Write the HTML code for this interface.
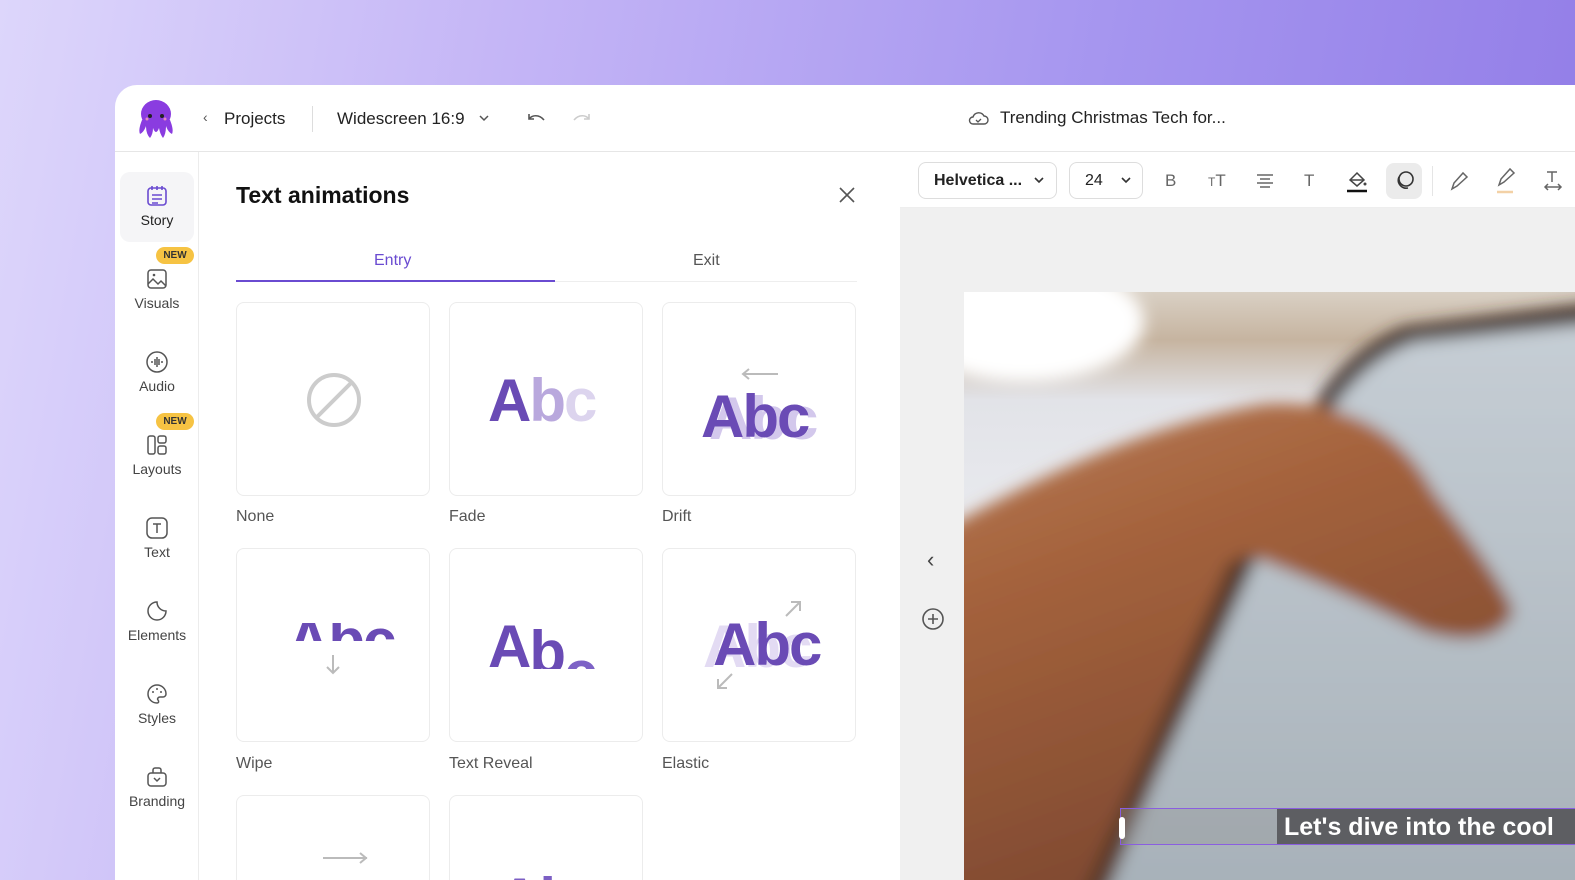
<!DOCTYPE html>
<html><head><meta charset="utf-8"><style>
*{box-sizing:border-box;margin:0;padding:0}
body{width:1575px;height:880px;overflow:hidden;font-family:"Liberation Sans",sans-serif;background:linear-gradient(100deg,#ddd6fb 0%,#c4b5f6 30%,#a595ef 65%,#8f79e6 100%);position:relative}
.app{position:absolute;left:115px;top:85px;width:1460px;height:795px;background:#fff;border-top-left-radius:22px;overflow:hidden}
.hdr{position:absolute;left:0;top:0;width:100%;height:67px;border-bottom:1px solid #e6e6e6}
.t{position:absolute;white-space:nowrap}
.side{position:absolute;left:0;top:67px;width:84px;height:730px;border-right:1px solid #ececec}
.nav{position:absolute;left:5px;width:74px;height:70px;text-align:center;font-size:14px;color:#444}
.nav svg{display:block;margin:12px auto 4px}
.new{position:absolute;left:41px;width:38px;height:17px;border-radius:9px;background:#f6c343;font-size:10px;font-weight:bold;color:#333;text-align:center;line-height:17px}
.card{position:absolute;width:194px;height:194px;border:1px solid #ececec;border-radius:8px;background:#fff;overflow:hidden}
.lbl{position:absolute;font-size:16px;color:#555}
.abc{position:absolute;font-weight:bold;font-size:60px;letter-spacing:-2px;color:#6a4bb5;line-height:60px}
.tb{position:absolute;top:67px;left:785px;width:700px;height:56px;border-bottom:1px solid #eee}
.canvas{position:absolute;left:785px;top:123px;width:680px;height:680px;background:#f0f0f0}
</style></head><body>
<div class="app">
 <div class="hdr">
  <svg style="position:absolute;left:21px;top:13px" width="40" height="42" viewBox="0 0 40 42"><ellipse cx="20" cy="16" rx="15" ry="14" fill="#8a3ce0"/><path d="M6 22 Q2 32 4 36 Q8 34 10 28 Q10 36 14 40 Q17 36 17 30 Q20 38 23 30 Q24 36 27 40 Q30 36 30 28 Q32 34 36 36 Q38 32 34 22Z" fill="#8a3ce0"/><circle cx="14" cy="18" r="2" fill="#222"/><circle cx="26" cy="18" r="2" fill="#222"/><circle cx="11" cy="21" r="1.5" fill="#e58ac0"/><circle cx="29" cy="21" r="1.5" fill="#e58ac0"/></svg>
  <div class="t" style="left:88px;top:24px;font-size:14px;color:#555">‹</div>
  <div class="t" style="left:109px;top:24px;font-size:17px;color:#222">Projects</div>
  <div style="position:absolute;left:197px;top:21px;width:1px;height:26px;background:#ddd"></div>
  <div class="t" style="left:222px;top:24px;font-size:17px;color:#222">Widescreen 16:9</div>
  <svg style="position:absolute;left:363px;top:28px" width="12" height="10"><path d="M2 3l4 4 4-4" stroke="#555" stroke-width="1.5" fill="none"/></svg>
  <svg style="position:absolute;left:410px;top:25px" width="22" height="16"><path d="M4 4v5h5M4 9c3-4 10-5 15 1" stroke="#555" stroke-width="1.6" fill="none"/></svg>
  <svg style="position:absolute;left:456px;top:25px" width="22" height="16"><path d="M18 4v5h-5M18 9c-3-4-10-5-15 1" stroke="#ccc" stroke-width="1.6" fill="none"/></svg>
  <svg style="position:absolute;left:852px;top:24px" width="22" height="18"><path d="M6 15h11a4 4 0 0 0 0-8 6 6 0 0 0-11 1 3.5 3.5 0 0 0 0 7z" stroke="#555" stroke-width="1.4" fill="none"/><path d="M9 11l2 2 3-3" stroke="#555" stroke-width="1.3" fill="none"/></svg>
  <div class="t" style="left:885px;top:23px;font-size:17px;color:#222">Trending Christmas Tech for...</div>
 </div>
 <div class="side">
  <div style="position:absolute;left:5px;top:20px;width:74px;height:70px;background:#f5f5f7;border-radius:10px"></div>
  <div class="nav" style="top:20px;color:#222"><svg width="24" height="24" viewBox="0 0 24 24"><rect x="3" y="4" width="18" height="17" rx="3" stroke="#6a4bd1" stroke-width="1.6" fill="none"/><path d="M7 2v4M12 2v4M17 2v4M7 11h10M7 15h10M7 19h6" stroke="#6a4bd1" stroke-width="1.6"/></svg>Story</div>
  <div class="new" style="top:95px">NEW</div>
  <div class="nav" style="top:103px"><svg width="24" height="24" viewBox="0 0 24 24"><rect x="3" y="3" width="18" height="18" rx="3" stroke="#555" stroke-width="1.5" fill="none"/><path d="M3 17l5-5 5 5 3-3 5 5" stroke="#555" stroke-width="1.5" fill="none"/><circle cx="9" cy="8" r="1.3" fill="#555"/></svg>Visuals</div>
  <div class="nav" style="top:186px"><svg width="24" height="24" viewBox="0 0 24 24"><circle cx="12" cy="12" r="10" stroke="#555" stroke-width="1.5" fill="none"/><path d="M7 11v2M10 9v6M12 7v10M14 9v6M17 11v2" stroke="#555" stroke-width="1.5"/></svg>Audio</div>
  <div class="new" style="top:261px">NEW</div>
  <div class="nav" style="top:269px"><svg width="24" height="24" viewBox="0 0 24 24"><rect x="3" y="3" width="7" height="18" rx="2" stroke="#555" stroke-width="1.5" fill="none"/><rect x="13" y="3" width="8" height="7" rx="2" stroke="#555" stroke-width="1.5" fill="none"/><rect x="13" y="13" width="8" height="8" rx="2" stroke="#555" stroke-width="1.5" fill="none"/></svg>Layouts</div>
  <div class="nav" style="top:352px"><svg width="24" height="24" viewBox="0 0 24 24"><rect x="2" y="2" width="20" height="20" rx="5" stroke="#555" stroke-width="1.5" fill="none"/><path d="M8 8h8M12 8v9" stroke="#555" stroke-width="1.5"/></svg>Text</div>
  <div class="nav" style="top:435px"><svg width="24" height="24" viewBox="0 0 24 24"><path d="M12 3a9 9 0 1 0 9 9c-5 0-9-4-9-9z" stroke="#555" stroke-width="1.5" fill="none"/></svg>Elements</div>
  <div class="nav" style="top:518px"><svg width="24" height="24" viewBox="0 0 24 24"><path d="M12 3a9 9 0 0 0 0 18c2 0 2-2 1-3s0-3 2-3h3a3 3 0 0 0 3-3c0-5-4-9-9-9z" stroke="#555" stroke-width="1.5" fill="none"/><circle cx="8" cy="10" r="1" fill="#555"/><circle cx="12" cy="7" r="1" fill="#555"/><circle cx="16" cy="10" r="1" fill="#555"/></svg>Styles</div>
  <div class="nav" style="top:601px"><svg width="24" height="24" viewBox="0 0 24 24"><rect x="3" y="8" width="18" height="13" rx="3" stroke="#555" stroke-width="1.5" fill="none"/><path d="M8 8V5a2 2 0 0 1 2-2h4a2 2 0 0 1 2 2v3M9 13l3 3 3-3" stroke="#555" stroke-width="1.5" fill="none"/></svg>Branding</div>
 </div>
 <div class="t" style="left:121px;top:97px;font-size:23px;font-weight:bold;color:#111">Text animations</div>
 <svg style="position:absolute;left:722px;top:100px" width="20" height="20"><path d="M3 3l14 14M17 3L3 17" stroke="#555" stroke-width="1.6"/></svg>
 <div class="t" style="left:259px;top:167px;font-size:16px;color:#6a4bd1">Entry</div>
 <div class="t" style="left:578px;top:167px;font-size:16px;color:#555">Exit</div>
 <div style="position:absolute;left:121px;top:195px;width:319px;height:2px;background:#6a4bd1"></div>
 <div style="position:absolute;left:440px;top:196px;width:302px;height:1px;background:#eee"></div>

 <div class="card" style="left:121px;top:217px"><svg style="position:absolute;left:68px;top:68px" width="58" height="58"><circle cx="29" cy="29" r="25" stroke="#ccc" stroke-width="4" fill="none"/><path d="M11 47L47 11" stroke="#ccc" stroke-width="4"/></svg></div>
 <div class="lbl" style="left:121px;top:423px">None</div>
 <div class="card" style="left:334px;top:217px"><div class="abc" style="left:38px;top:68px">A<span style="color:#b9a8dd">b</span><span style="color:#dcd4ee">c</span></div></div>
 <div class="lbl" style="left:334px;top:423px">Fade</div>
 <div class="card" style="left:547px;top:217px"><svg style="position:absolute;left:77px;top:64px" width="40" height="14"><path d="M38 7H3M9 2L3 7l6 5" stroke="#bbb" stroke-width="2" fill="none"/></svg><div class="abc" style="left:46px;top:86px;color:#d3c8ec">Abc</div><div class="abc" style="left:38px;top:84px">Abc</div></div>
 <div class="lbl" style="left:547px;top:423px">Drift</div>

 <div class="card" style="left:121px;top:463px"><div style="position:absolute;left:0;top:74px;width:194px;height:18px;overflow:hidden"><div class="abc" style="left:50px;top:-12px">Abc</div></div><svg style="position:absolute;left:88px;top:104px" width="16" height="22"><path d="M8 2v18M2 14l6 6 6-6" stroke="#bbb" stroke-width="2" fill="none"/></svg></div>
 <div class="lbl" style="left:121px;top:670px">Wipe</div>
 <div class="card" style="left:334px;top:463px"><div style="position:absolute;left:0;top:60px;width:194px;height:60px;overflow:hidden"><div class="abc" style="left:38px;top:8px">A<span style="position:relative;top:6px">b</span><span style="position:relative;top:26px;color:#7d62c6">c</span></div></div></div>
 <div class="lbl" style="left:334px;top:670px">Text Reveal</div>
 <div class="card" style="left:547px;top:463px"><svg style="position:absolute;left:120px;top:50px" width="20" height="20"><path d="M3 17L17 3M8 3h9v9" stroke="#bbb" stroke-width="2" fill="none"/></svg><svg style="position:absolute;left:52px;top:122px" width="20" height="20"><path d="M17 3L3 17M3 8v9h9" stroke="#bbb" stroke-width="2" fill="none"/></svg><div class="abc" style="left:40px;top:68px;color:#e3dbf3">Abc</div><div class="abc" style="left:50px;top:66px">Abc</div></div>
 <div class="lbl" style="left:547px;top:670px">Elastic</div>

 <div class="card" style="left:121px;top:710px;height:120px"><svg style="position:absolute;left:84px;top:55px" width="48" height="14"><path d="M2 7h44M39 2l6 5-6 5" stroke="#bbb" stroke-width="2" fill="none"/></svg></div>
 <div class="card" style="left:334px;top:710px;height:120px"><div class="abc" style="left:48px;top:74px;color:#7c5fc4">Abc</div></div>

 <div class="canvas"></div>
 <div class="tb">
  <div style="position:absolute;left:18px;top:10px;width:139px;height:37px;border:1px solid #ddd;border-radius:8px"></div>
  <div class="t" style="left:34px;top:20px;font-size:16px;font-weight:bold;color:#222">Helvetica ...</div>
  <svg style="position:absolute;left:134px;top:24px" width="10" height="8"><path d="M1 2l4 4 4-4" stroke="#333" stroke-width="1.6" fill="none"/></svg>
  <div style="position:absolute;left:169px;top:10px;width:74px;height:37px;border:1px solid #ddd;border-radius:8px"></div>
  <div class="t" style="left:185px;top:20px;font-size:16px;color:#222">24</div>
  <svg style="position:absolute;left:221px;top:24px" width="10" height="8"><path d="M1 2l4 4 4-4" stroke="#333" stroke-width="1.6" fill="none"/></svg>
  <div class="t" style="left:265px;top:19px;font-size:17px;color:#666">B</div>
  <div class="t" style="left:308px;top:19px;font-size:17px;color:#666"><span style="font-size:12px">T</span>T</div>
  <svg style="position:absolute;left:355px;top:19px" width="20" height="20"><path d="M2 4h16M5 8h10M2 12h16M5 16h10" stroke="#666" stroke-width="1.5"/></svg>
  <div class="t" style="left:404px;top:19px;font-size:17px;color:#666">T</div>
  <svg style="position:absolute;left:445px;top:16px" width="24" height="26"><path d="M5 12l7-7 7 7-7 6z" stroke="#444" stroke-width="1.5" fill="none"/><path d="M5 12h14" stroke="#444" stroke-width="1.5"/><circle cx="20" cy="16" r="1.5" fill="#444"/><path d="M2 23h20" stroke="#111" stroke-width="2.5"/></svg>
  <div style="position:absolute;left:486px;top:11px;width:36px;height:36px;border-radius:8px;background:#ebebeb"></div>
  <svg style="position:absolute;left:492px;top:17px" width="24" height="24"><circle cx="14" cy="10" r="7" stroke="#333" stroke-width="1.6" fill="none"/><path d="M7 8a8 8 0 0 0 9 11" stroke="#333" stroke-width="1.6" fill="none"/></svg>
  <div style="position:absolute;left:532px;top:14px;width:1px;height:30px;background:#e5e5e5"></div>
  <svg style="position:absolute;left:548px;top:17px" width="24" height="24"><path d="M4 20l2-6 9-10 4 4-10 9z" stroke="#666" stroke-width="1.5" fill="none"/></svg>
  <svg style="position:absolute;left:595px;top:15px" width="24" height="28"><path d="M4 18l2-6 9-10 4 4-10 9z" stroke="#666" stroke-width="1.5" fill="none"/><path d="M2 25h16" stroke="#f3d1a6" stroke-width="2.5"/></svg>
  <svg style="position:absolute;left:643px;top:17px" width="20" height="24"><path d="M4 3h10M9 3v10M2 18h16M5 15l-3 3 3 3M15 15l3 3-3 3" stroke="#666" stroke-width="1.5" fill="none"/></svg>
 </div>
 <div class="t" style="left:812px;top:462px;font-size:22px;color:#444">‹</div>
 <svg style="position:absolute;left:806px;top:522px" width="24" height="24"><circle cx="12" cy="12" r="10" stroke="#555" stroke-width="1.6" fill="none"/><path d="M12 7v10M7 12h10" stroke="#555" stroke-width="1.6"/></svg>
 <svg style="position:absolute;left:849px;top:207px" width="620" height="600" viewBox="0 0 620 600">
  <defs>
   <filter id="b" x="-10%" y="-10%" width="120%" height="120%"><feGaussianBlur stdDeviation="8"/></filter>
   <linearGradient id="bg" x1="0" y1="0" x2="0" y2="1"><stop offset="0" stop-color="#d9d0c4"/><stop offset="0.08" stop-color="#c6b4a0"/><stop offset="0.18" stop-color="#e2e3e8"/><stop offset="0.5" stop-color="#eceef2"/><stop offset="1" stop-color="#dcdde0"/></linearGradient>
   <linearGradient id="hand" x1="0" y1="0" x2="0.4" y2="1"><stop offset="0" stop-color="#b87c56"/><stop offset="0.35" stop-color="#a4623c"/><stop offset="1" stop-color="#7a4630"/></linearGradient>
   <linearGradient id="scr" x1="0" y1="0" x2="0" y2="1"><stop offset="0" stop-color="#c6ced5"/><stop offset="1" stop-color="#a6b0b8"/></linearGradient>
  </defs>
  <rect width="620" height="600" fill="url(#bg)"/>
  <g filter="url(#b)">
   <ellipse cx="60" cy="30" rx="120" ry="60" fill="#fff"/>
   <path d="M105 620 L290 240 L346 120 Q380 60 440 35 L640 10 L640 620Z" fill="#3c2b22"/>
   <path d="M130 620 L300 250 L360 130 Q395 70 450 50 L640 30 L640 620Z" fill="url(#scr)"/>
   <path d="M-20 238 Q150 140 300 112 Q420 105 470 200 Q540 290 550 320 Q530 360 460 340 Q360 290 280 262 L125 620 L-20 620Z" fill="url(#hand)"/>
   <path d="M110 620 L265 270 L285 265 L135 620Z" fill="#5a3a2c"/>
  </g>
 </svg>
 <div style="position:absolute;left:1005px;top:723px;width:470px;height:37px;border:1px solid #8a5ee0;background:rgba(150,150,150,0.35)"></div>
 <div style="position:absolute;left:1162px;top:724px;width:310px;height:35px;background:#5d5e62"></div>
 <div style="position:absolute;left:1004px;top:732px;width:6px;height:22px;border-radius:3px;background:#fff"></div>
 <div class="t" style="left:1169px;top:728px;font-size:25px;font-weight:bold;color:#fff">Let's dive into the cool</div>
</div>
</body></html>
